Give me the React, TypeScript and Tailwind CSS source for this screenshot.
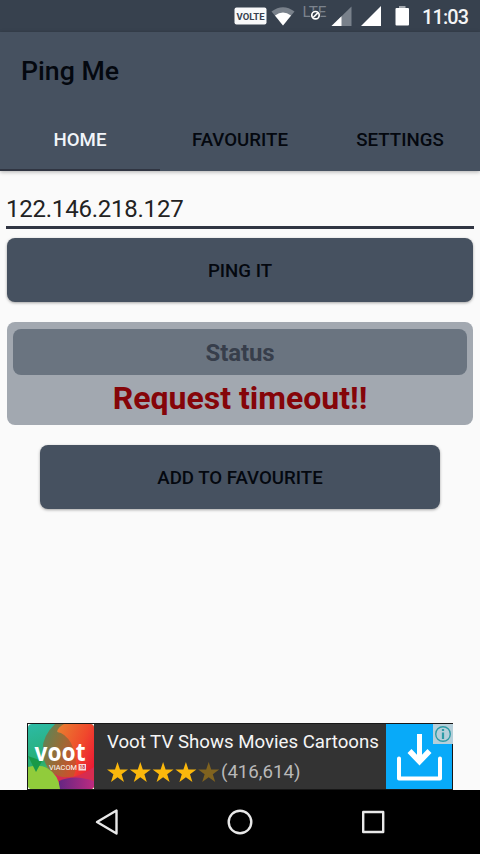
import { clsx } from "clsx";

const tabs = ["HOME", "FAVOURITE", "SETTINGS"];

function StatusBar() {
  return (
    <div className="h-8 bg-[#37414e]">
      <svg width="480" height="32" viewBox="0 0 480 32">
        {/* VoLTE badge */}
        <rect x="234.5" y="7.5" width="32" height="17" rx="2" fill="#f8f9fa" />
        <text
          x="250.5"
          y="19.600"
          textAnchor="middle"
          textLength="28"
          lengthAdjust="spacingAndGlyphs"
          fontSize="9.800"
          fontWeight="700"
          fill="#37414e"
        >
          VOLTE
        </text>
        {/* Wifi */}
        <path d="M271.500 11.500Q283 3 294.500 11.500L283 25.500Z" fill="#79818b" />
        <path d="M275 15.500Q283 9.500 291 15.500L283 25.500Z" fill="#fff" />
        {/* LTE without service */}
        <text x="302.500" y="17" textLength="24" lengthAdjust="spacingAndGlyphs" fontSize="14.500" fill="#7b838d">
          LTE
        </text>
        <circle cx="315.500" cy="15.200" r="5.200" fill="#37414e" />
        <circle cx="315.500" cy="15.200" r="3.700" fill="none" stroke="#fff" strokeWidth="1.700" />
        <path d="M313.200 17.500L317.800 12.900" stroke="#fff" strokeWidth="1.600" />
        {/* Signal */}
        <path d="M331.500 26L351.500 6.500V26Z" fill="#79818b" />
        <path d="M331.500 26L341.500 16.300V26Z" fill="#fff" />
        <path d="M361 26L381 6V26Z" fill="#fff" />
        {/* Battery */}
        <rect x="399" y="6" width="6.500" height="3" fill="#a4a9af" />
        <rect x="395.500" y="8" width="13.500" height="17.500" rx="1" fill="#fff" />
        <text x="422" y="24" textLength="47" fontSize="19.800" fontWeight="500" fill="#f4f5f6">
          11:03
        </text>
      </svg>
    </div>
  );
}

function Header() {
  return (
    <header className="relative h-[139px] bg-[#465160] shadow-[0_1px_4px_rgba(0,0,0,0.3)]">
      <h1 className="flex h-[78px] items-center pl-[21px] text-[26.7px] font-medium text-[#04080f]">
        Ping Me
      </h1>
      <nav className="flex h-[61px]">
        {tabs.map((tab, i) => (
          <div
            key={tab}
            className={clsx(
              "flex flex-1 items-center justify-center border-b-2 text-[18.67px] font-medium",
              i === 0 ? "border-[#303542] text-[#f2f5fa]" : "border-transparent text-[#04080f]"
            )}
          >
            {tab}
          </div>
        ))}
      </nav>
    </header>
  );
}

function VootLogo() {
  return (
    <svg width="66" height="65" viewBox="0 0 66 65" className="shrink-0">
      <defs>
        <clipPath id="logo">
          <rect width="66" height="65" rx="4" />
        </clipPath>
        <linearGradient id="teal" x1="0" y1="0" x2="0.3" y2="1">
          <stop offset="0" stopColor="#2cbba6" />
          <stop offset="0.6" stopColor="#28ad72" />
          <stop offset="1" stopColor="#8ccc3e" />
        </linearGradient>
        <linearGradient id="red" x1="0" y1="0" x2="1" y2="0.7">
          <stop offset="0" stopColor="#e88630" />
          <stop offset="0.6" stopColor="#f0492c" />
          <stop offset="1" stopColor="#eb1736" />
        </linearGradient>
        <linearGradient id="brown" x1="0" y1="0" x2="1" y2="0.6">
          <stop offset="0" stopColor="#4d8a60" />
          <stop offset="0.5" stopColor="#90703a" />
          <stop offset="1" stopColor="#c9522c" />
        </linearGradient>
        <linearGradient id="purple" x1="0" y1="0" x2="1" y2="0">
          <stop offset="0" stopColor="#652683" />
          <stop offset="1" stopColor="#bd2b80" />
        </linearGradient>
      </defs>
      <rect width="66" height="65" fill="#fff" />
      <g clipPath="url(#logo)">
        <rect width="66" height="65" fill="url(#teal)" />
        <path d="M27 0H66V65H34Q44 45 30 10Z" fill="url(#red)" />
        <path d="M27 0Q12 14 15 32Q18 48 34 54H45Q52 38 43 19Q37 9 29 8Q30 3 36 0Z" fill="url(#brown)" />
        <path d="M18 43Q26 51 34 53Q50 55 66 43V65H31Z" fill="#d72c50" />
        <path d="M31 57Q46 50 66 57V65H31Z" fill="url(#purple)" />
        <path d="M0 43Q12 40 19 44Q31 51 32 65H0Z" fill="#91cc3b" />
        <path d="M0 32L14 37L8 48Z" fill="#189947" />
      </g>
      <text
        x="6.500"
        y="36.500"
        textLength="51"
        lengthAdjust="spacingAndGlyphs"
        fontFamily="Noto Sans, sans-serif"
        fontSize="25.500"
        fontWeight="700"
        fill="#fff"
      >
        voot
      </text>
      <text x="21" y="45.800" textLength="28" lengthAdjust="spacingAndGlyphs" fontSize="6.800" fill="#fff">
        VIACOM
      </text>
      <rect x="50.500" y="40" width="7.500" height="6.500" fill="#f7dddd" />
      <text x="51.500" y="45.300" fontSize="5" fontWeight="700" fill="#c6303c">
        18
      </text>
    </svg>
  );
}

function Stars() {
  return (
    <svg width="114" height="22" viewBox="0 0 114 22">
      {[0, 1, 2, 3, 4].map((i) => (
        <path
          key={i}
          transform={`translate(${i * 22.8} 0.5)`}
          d="M10.500 0.500L13 8H21L14.600 12.700L17 20.500L10.500 15.800L4 20.500L6.400 12.700L0 8H8Z"
          fill={i < 4 ? "#fbb80c" : "#80631f"}
        />
      ))}
    </svg>
  );
}

function AdBanner() {
  return (
    <div className="mx-auto flex h-[67px] w-[426px] border border-[#171717] bg-[#333]">
      <VootLogo />
      <div className="flex-1 pl-[13px] pt-[5px]">
        <p className="text-[18.67px] leading-[27px] whitespace-nowrap text-[#f5f5f5]">
          Voot TV Shows Movies Cartoons
        </p>
        <div className="flex h-8 items-center">
          <Stars />
          <span className="text-[18.67px] text-[#b9b9b9]">(416,614)</span>
        </div>
      </div>
      <div className="relative w-[66px] shrink-0 bg-[#08aaf9]">
        <svg width="66" height="65" viewBox="0 0 66 65" fill="none" stroke="#fff">
          <path d="M13 34.500V54.500H54V34.500" strokeWidth="4" strokeLinejoin="round" strokeLinecap="round" />
          <path d="M33.500 10V36" strokeWidth="5" />
          <path d="M23.500 27L33.500 37.500L43.500 27" strokeWidth="5.500" />
        </svg>
        <div className="absolute top-0 -right-px flex h-5 w-5 items-center justify-center bg-[#b5cfda]">
          <svg width="18" height="18" viewBox="0 0 18 18">
            <circle cx="9" cy="9" r="7.300" fill="none" stroke="#2d9ba6" strokeWidth="1.400" />
            <path d="M9 4V6M9 7.500V14" stroke="#2d9ba6" strokeWidth="2.200" />
          </svg>
        </div>
      </div>
    </div>
  );
}

function NavBar() {
  return (
    <div className="h-16 bg-black">
      <svg width="480" height="64" viewBox="0 0 480 64" fill="none" stroke="#e8e8e8" strokeWidth="2.400" strokeLinejoin="round">
        <path d="M97 32L116.500 20.500V43.500Z" />
        <circle cx="240" cy="32" r="11.300" />
        <rect x="363.200" y="22" width="20" height="20" />
      </svg>
    </div>
  );
}

export default function App() {
  return (
    <div className="flex h-[854px] w-[480px] flex-col overflow-hidden bg-[#fafafa] font-['Roboto',sans-serif]">
      <StatusBar />
      <Header />
      <main className="flex flex-1 flex-col px-[7px] pt-5">
        <div className="-mx-px flex h-[38px] items-center border-b-3 border-[#303542] text-[24px] tracking-[-0.23px] text-[#222]">
          122.146.218.127
        </div>
        <button className="mt-[9px] h-16 rounded-[8px] bg-[#465160] pt-0.5 text-[18.67px] font-medium text-[#04080f] shadow-[0_1px_3px_rgba(0,0,0,0.35)]">
          PING IT
        </button>
        <section className="mt-5 h-[103px] rounded-[8px] bg-[#a2a8b0] p-1.5 pt-[7px] text-center font-bold">
          <div className="flex h-[46px] items-center justify-center rounded-[8px] bg-[#6a7480] pt-px text-[24px] tracking-[-0.1px] text-[#373e4b]">
            Status
          </div>
          <p className="text-[32px] leading-[46px] text-[#850509]">Request timeout!!</p>
        </section>
        <button className="mx-[33px] mt-5 h-16 rounded-[8px] bg-[#465160] pt-0.5 text-[18.67px] font-medium text-[#04080f] shadow-[0_1px_3px_rgba(0,0,0,0.35)]">
          ADD TO FAVOURITE
        </button>
      </main>
      <AdBanner />
      <NavBar />
    </div>
  );
}
